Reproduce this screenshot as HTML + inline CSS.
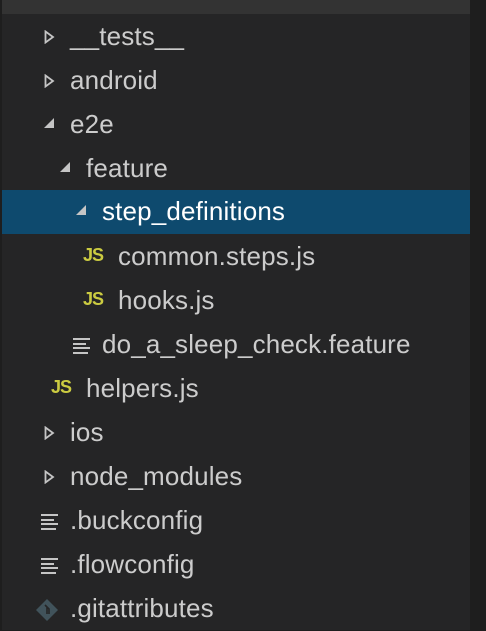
<!DOCTYPE html>
<html><head><style>
body{margin:0;width:486px;height:630px;background:#1e1e1e;overflow:hidden;font-family:"Liberation Sans",sans-serif;}
.panel{position:absolute;left:2px;top:0;width:468px;height:630px;background:#252526;}
.top{position:absolute;left:2px;top:0;width:468px;height:14px;background:#333333;}
.row{position:absolute;left:2px;width:468px;height:44px;line-height:44px;color:#cccccc;font-size:26px;letter-spacing:0.15px;}
.row span.t{position:absolute;top:-1px;}
.sel{background:#0e4a6e;color:#fff;}
.ch{position:absolute;top:15px;}
.js{position:absolute;font-weight:bold;color:#cbcb41;font-size:18px;top:-2px;letter-spacing:-1px;}
.fi{position:absolute;top:15px;width:17px;height:16px;}
.fi i{display:block;height:2px;background:#c5c5c5;margin-bottom:2.5px;}
</style></head><body>
<div class="panel"></div>
<div class="top"></div>
<svg width="0" height="0" style="position:absolute"><defs>
<path id="cr" d="M1.5 1.5 L9 7 L1.5 12.5 Z" fill="none" stroke="#c5c5c5" stroke-width="1.8"/>
<path id="cd" d="M11 1 L11 11 L1 11 Z" fill="#c5c5c5"/>
</defs></svg>

<div class="row" style="top:15px"><svg class="ch" style="left:42px" width="11" height="14"><use href="#cr"/></svg><span class="t" style="left:68px">__tests__</span></div>
<div class="row" style="top:59px"><svg class="ch" style="left:42px" width="11" height="14"><use href="#cr"/></svg><span class="t" style="left:68px">android</span></div>
<div class="row" style="top:103px"><svg class="ch" style="left:41px;top:14px" width="12" height="12"><use href="#cd"/></svg><span class="t" style="left:68px">e2e</span></div>
<div class="row" style="top:147px"><svg class="ch" style="left:57px;top:14px" width="12" height="12"><use href="#cd"/></svg><span class="t" style="left:84px">feature</span></div>
<div class="row sel" style="top:190px"><svg class="ch" style="left:73px;top:14px" width="12" height="12"><use href="#cd"/></svg><span class="t" style="left:100px">step_definitions</span></div>
<div class="row" style="top:235px"><span class="js" style="left:81px">JS</span><span class="t" style="left:116px">common.steps.js</span></div>
<div class="row" style="top:279px"><span class="js" style="left:81px">JS</span><span class="t" style="left:116px">hooks.js</span></div>
<div class="row" style="top:323px"><div class="fi" style="left:71px"><i style="width:17px"></i><i style="width:13px"></i><i style="width:17px"></i><i style="width:15px"></i></div><span class="t" style="left:100px">do_a_sleep_check.feature</span></div>
<div class="row" style="top:367px"><span class="js" style="left:49px">JS</span><span class="t" style="left:84px">helpers.js</span></div>
<div class="row" style="top:411px"><svg class="ch" style="left:42px" width="11" height="14"><use href="#cr"/></svg><span class="t" style="left:68px">ios</span></div>
<div class="row" style="top:455px"><svg class="ch" style="left:42px" width="11" height="14"><use href="#cr"/></svg><span class="t" style="left:68px">node_modules</span></div>
<div class="row" style="top:499px"><div class="fi" style="left:39px"><i style="width:17px"></i><i style="width:13px"></i><i style="width:17px"></i><i style="width:15px"></i></div><span class="t" style="left:68px">.buckconfig</span></div>
<div class="row" style="top:543px"><div class="fi" style="left:39px"><i style="width:17px"></i><i style="width:13px"></i><i style="width:17px"></i><i style="width:15px"></i></div><span class="t" style="left:68px">.flowconfig</span></div>
<div class="row" style="top:587px"><svg style="position:absolute;left:33px;top:11px" width="24" height="24"><path d="M12 1 L23 12 L12 23 L1 12 Z" fill="#41535b"/><path d="M10 7 L14 11 L14 16 M12 9 L12 16" stroke="#252526" stroke-width="1.6" fill="none"/></svg><span class="t" style="left:68px">.gitattributes</span></div>
</body></html>
